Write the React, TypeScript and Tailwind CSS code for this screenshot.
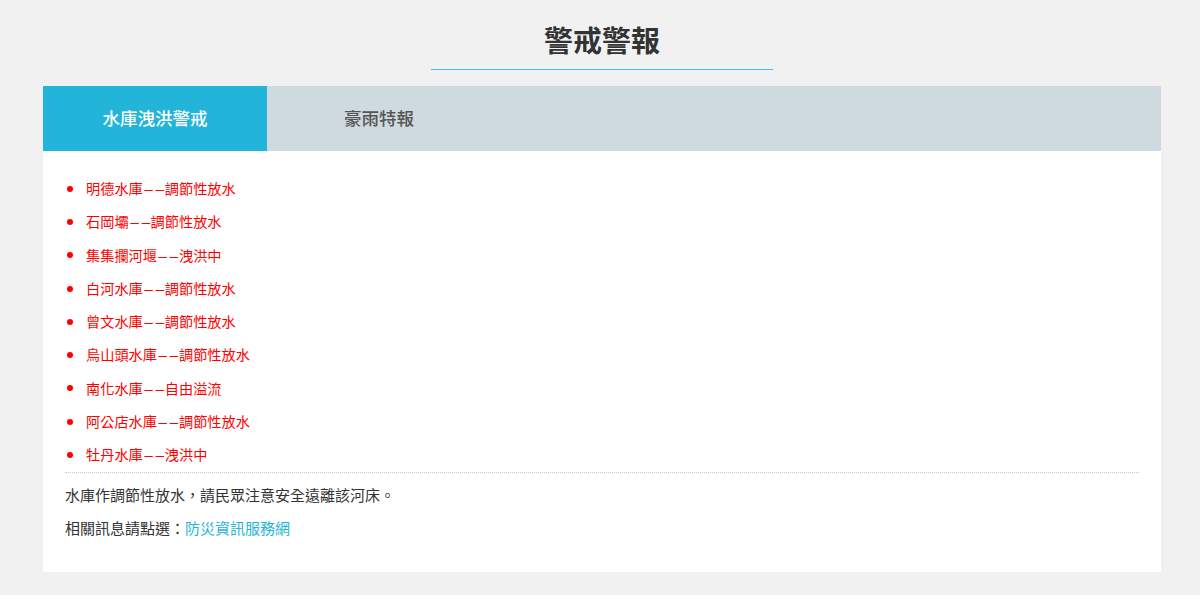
import React from 'react';

const reservoirs: [string, string][] = [
  ['明德水庫', '調節性放水'],
  ['石岡壩', '調節性放水'],
  ['集集攔河堰', '洩洪中'],
  ['白河水庫', '調節性放水'],
  ['曾文水庫', '調節性放水'],
  ['烏山頭水庫', '調節性放水'],
  ['南化水庫', '自由溢流'],
  ['阿公店水庫', '調節性放水'],
  ['牡丹水庫', '洩洪中'],
];

const font = { fontFamily: '"Noto Sans CJK TC", "Noto Sans", sans-serif' };

function Tabs() {
  return (
    <div className="flex h-[65px] bg-[#cfd9e0]">
      <button className="w-[224px] bg-[#22b5d9] text-[17.5px] font-medium text-white">水庫洩洪警戒</button>
      <button className="w-[224px] text-[17.5px] font-medium text-[#555]">豪雨特報</button>
    </div>
  );
}

export default function App() {
  return (
    <div className="min-h-[595px] bg-[#f1f1f1] pt-[20px]" style={font}>
      <div className="ml-[43px] w-[1118px]">
        <div className="flex flex-col items-center">
          <h1 className="text-[29px] font-bold leading-[38px] text-[#333]">警戒警報</h1>
          <div className="mt-[11px] h-px w-[342px] bg-[#3fc0e8]" />
        </div>
        <div className="mt-[16px] bg-white">
          <Tabs />
          <div className="px-[22px] pt-[21px] pb-[33px]">
            <ul className="border-b border-dotted border-[#c8c8c8]">
              {reservoirs.map(([name, state]) => (
                <li key={name} className="flex items-center text-[14.2px] leading-[33.3px] text-[#ff0000]">
                  <span className="ml-[2px] mr-[13px] h-[6px] w-[6px] rounded-full bg-[#ff0000]" />
                  {name}
                  <span className="inline-block w-[22px]">
                    <span className="inline-block origin-left scale-x-[2.3]">--</span>
                  </span>
                  {state}
                </li>
              ))}
            </ul>
            <p className="mt-[11px] text-[15px] leading-[22px] text-[#333]">水庫作調節性放水，請民眾注意安全遠離該河床。</p>
            <p className="mt-[11px] text-[15px] leading-[22px] text-[#333]">
              相關訊息請點選：<a href="#" className="text-[#22b5d9]">防災資訊服務網</a>
            </p>
          </div>
        </div>
      </div>
    </div>
  );
}
